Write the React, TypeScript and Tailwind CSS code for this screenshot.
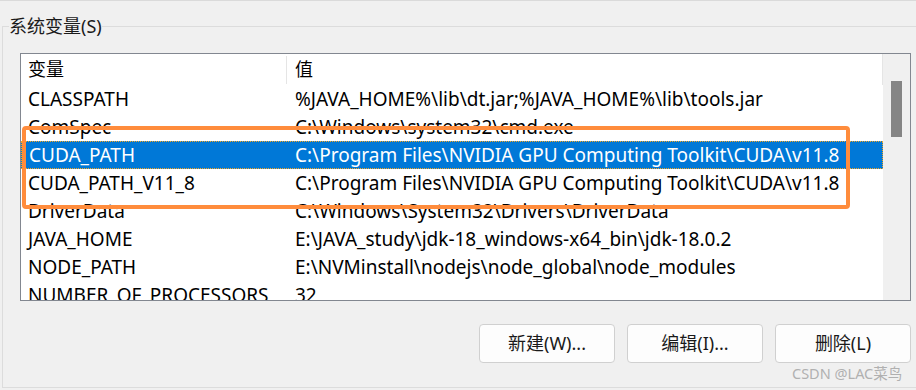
import React from "react";

const rows: { name: string; value: string; selected?: boolean }[] = [
  { name: "CLASSPATH", value: "%JAVA_HOME%\\lib\\dt.jar;%JAVA_HOME%\\lib\\tools.jar" },
  { name: "ComSpec", value: "C:\\Windows\\system32\\cmd.exe" },
  { name: "CUDA_PATH", value: "C:\\Program Files\\NVIDIA GPU Computing Toolkit\\CUDA\\v11.8", selected: true },
  { name: "CUDA_PATH_V11_8", value: "C:\\Program Files\\NVIDIA GPU Computing Toolkit\\CUDA\\v11.8" },
  { name: "DriverData", value: "C:\\Windows\\System32\\Drivers\\DriverData" },
  { name: "JAVA_HOME", value: "E:\\JAVA_study\\jdk-18_windows-x64_bin\\jdk-18.0.2" },
  { name: "NODE_PATH", value: "E:\\NVMinstall\\nodejs\\node_global\\node_modules" },
  { name: "NUMBER_OF_PROCESSORS", value: "32" },
];

const font = { fontFamily: '"Noto Sans", "Noto Sans CJK SC", sans-serif' };

export default function App() {
  return (
    <div
      className="relative w-[916px] h-[390px] overflow-hidden bg-[#f0f0f0] border-t border-[#dadada] text-[19px] text-black"
      style={font}
    >
      <fieldset className="ml-[2px] mt-[13px] w-[940px] h-[374px] border border-[#dcdcdc] pl-[6px]">
        <legend className="leading-[24px] text-[18px] text-[#1a1a1a]">系统变量(S)</legend>

        <div className="ml-[11px] mt-[15px] w-[891px] h-[248px] border border-[#828790] bg-white flex overflow-hidden">
          <div className="w-[862px] flex flex-col">
            {/* header */}
            <div className="h-[31px] flex shrink-0 items-center border-r border-[#e5e5e5] text-[18px]">
              <div className="w-[266px] pl-[7px] border-r border-[#e5e5e5] h-[28px] flex items-center">变量</div>
              <div className="pl-[8px]">值</div>
            </div>
            {rows.map((r) => (
              <div
                key={r.name}
                className={
                  r.selected
                    ? "h-[28px] shrink-0 flex items-center bg-[#0078d7] text-white border border-dotted border-[#f5a623] leading-[26px]"
                    : "h-[28px] shrink-0 flex items-center leading-[28px]"
                }
              >
                <div className={r.selected ? "w-[265px] pl-[7px] whitespace-nowrap" : "w-[266px] pl-[7px] whitespace-nowrap"}>
                  {r.name}
                </div>
                <div className="pl-[8px] whitespace-nowrap">{r.value}</div>
              </div>
            ))}
          </div>
          {/* scrollbar */}
          <div className="w-[27px] h-full bg-[#f0f0f0] flex justify-center pt-[27px]">
            <div className="w-[11px] h-[56px] bg-[#858585]" />
          </div>
        </div>

        <div className="mt-[23px] w-[892px] ml-[11px] flex justify-end gap-[12px] pr-[1px]">
          {["新建(W)...", "编辑(I)...", "删除(L)"].map((t) => (
            <button
              key={t}
              className="w-[136px] h-[39px] rounded-[4px] border border-[#d0d0d0] bg-[#fdfdfd] text-[18px] text-[#1a1a1a] flex items-center justify-center"
            >
              {t}
            </button>
          ))}
        </div>
      </fieldset>

      {/* annotation box */}
      <div className="absolute left-[22px] top-[125px] w-[828px] h-[83px] border-[4px] border-[#ff8c3c] rounded-[4px] pointer-events-none" />

      {/* watermark */}
      <div className="absolute left-[792px] top-[362px] text-[14.5px] leading-[20px] text-[#b0b0b0] whitespace-nowrap">
        CSDN @LAC菜鸟
      </div>
    </div>
  );
}
